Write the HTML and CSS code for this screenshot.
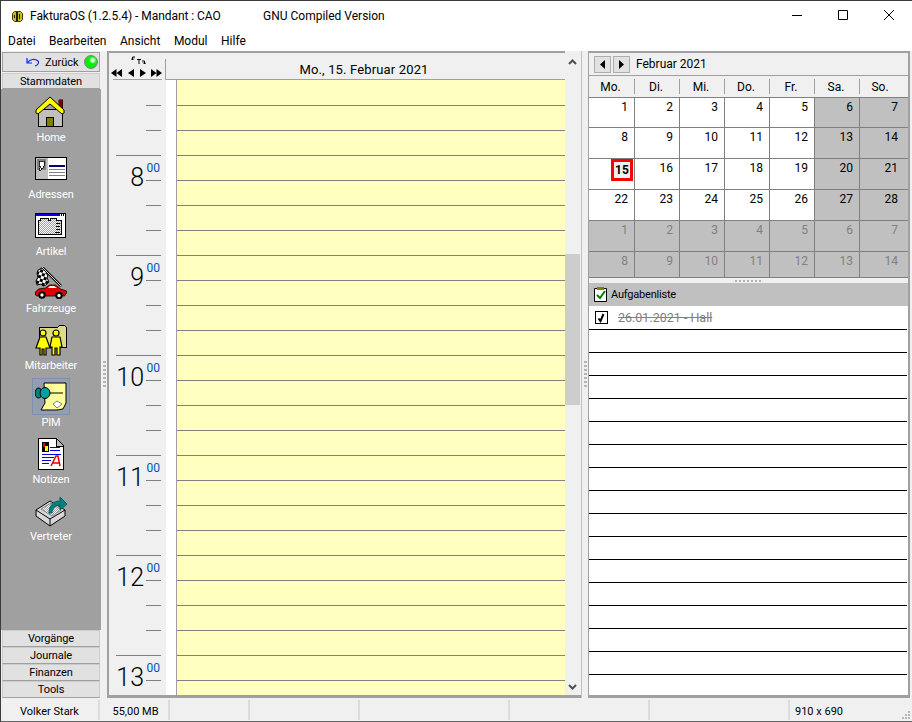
FILE: index.html
```html
<!DOCTYPE html>
<html lang="de">
<head>
  <meta charset="UTF-8" />
  <title>FakturaOS</title>
  <link rel="stylesheet" href="styles.css">
</head>
<body>
  <div class="window">
    <div class="titlebar">
      <svg class="app-icon" width="11" height="11" viewBox="0 0 11 11">
        <path d="M2.500 .5h6l2 2v6l-2 2h-6l-2-2v-6z" fill="#c8bc20" stroke="#403c00"/>
        <path d="M4 1h2v9H4zM7 3h1v5H7zM2 4h1v3H2z" fill="#202000"/>
      </svg>
      <span class="title">FakturaOS (1.2.5.4) - Mandant : CAO</span>
      <span class="title-extra">GNU Compiled Version</span>
      <div class="win-controls">
        <svg width="46" height="30" viewBox="0 0 46 30"><path d="M18 14.500h10" stroke="#000"/></svg>
        <svg width="46" height="30" viewBox="0 0 46 30"><path d="M18.500 9.500h9v9h-9z" fill="none" stroke="#000"/></svg>
        <svg width="46" height="30" viewBox="0 0 46 30"><path d="M18 9l10 10M28 9L18 19" stroke="#000" fill="none"/></svg>
      </div>
    </div>

    <div class="menubar">
      <span>Datei</span>
      <span>Bearbeiten</span>
      <span>Ansicht</span>
      <span>Modul</span>
      <span>Hilfe</span>
    </div>

    <div class="main">
      <!-- left module bar -->
      <div class="sidebar">
        <div class="back-btn">
          <svg width="14" height="10" viewBox="0 0 14 10"><path d="M1 1v5h5M1.500 5.500C4 2 9 1.500 12 4c1.500 1.500 0 4-3 5" fill="none" stroke="#0030e0" stroke-width="1.200"/></svg>
          <span>Zurück</span>
          <span class="led"></span>
        </div>
        <div class="tab">Stammdaten</div>
        <div class="modules">
          <div class="module">
            <svg width="32" height="32" viewBox="0 0 32 32" shape-rendering="crispEdges">
              <path d="M23.500 3.500h4v10h-4z" fill="#800000" stroke="#000" stroke-width=".5"/>
              <path d="M3.500 13.500h24v17h-24z" fill="#c0c0c0" stroke="#000"/>
              <path d="M11.500 21.500h7v9h-7z" fill="#808000" stroke="#000"/>
              <path d="M15 1L1 14v3l2 1L15 8l12 10 2-1v-3z" fill="#ffff00" stroke="#000" shape-rendering="auto"/>
            </svg>
            <span>Home</span>
          </div>
          <div class="module">
            <svg width="32" height="32" viewBox="0 0 32 32" shape-rendering="crispEdges">
              <path d="M.5 4.500h31v22H.5z" fill="#fff" stroke="#000"/>
              <path d="M1 5h12v21H1z" fill="#c0c0c0"/>
              <path d="M2 6h9v11H2z" fill="#808080"/>
              <path d="M4 8h5v5H8v2H6v2H4v-2h1v-2H4z" fill="#fff" stroke="#000" stroke-width=".8"/>
              <path d="M14 12h16v2H14z" fill="#000080"/>
              <path d="M14 16h16v1H14zM14 19h16v1H14zM14 22h16v1H14z" fill="#808080"/>
              <path d="M31 5h1v22H1v-1h30z" fill="#000"/>
            </svg>
            <span>Adressen</span>
          </div>
          <div class="module">
            <svg width="32" height="32" viewBox="0 0 32 32" shape-rendering="crispEdges">
              <defs>
                <pattern id="dither-grey" width="2" height="2" patternUnits="userSpaceOnUse">
                  <path d="M0 0h2v2H0z" fill="#fff"/><path d="M0 0h1v1H0zM1 1h1v1H1z" fill="#a0a0a0"/>
                </pattern>
              </defs>
              <path d="M.5 3.500h30v24H.5z" fill="#fff" stroke="#000"/>
              <path d="M1 4h24v2H1z" fill="#0000e0"/>
              <path d="M26 4h1v2h-1zM28 4h1v2h-1z" fill="#000"/>
              <path d="M3.500 10.500h2v-2h8v2h2v-2h6v2h5v14h-23z" fill="url(#dither-grey)" stroke="#000"/>
              <path d="M21 13h4v1h-4zM21 16h4v1h-4zM21 19h4v1h-4zM20 22h5v1h-5z" fill="#000"/>
            </svg>
            <span>Artikel</span>
          </div>
          <div class="module">
            <svg width="32" height="32" viewBox="0 0 32 32">
              <defs>
                <pattern id="checker" width="6" height="6" patternUnits="userSpaceOnUse" patternTransform="rotate(20)">
                  <path d="M0 0h6v6H0z" fill="#fff"/><path d="M0 0h3v3H0zM3 3h3v3H3z" fill="#000"/>
                </pattern>
              </defs>
              <path d="M7 0l19 19" stroke="#000" stroke-width="2.500"/>
              <path d="M7 0l19 19" stroke="#ffff00" stroke-width="1"/>
              <path d="M3 3l4-2 6 6-1 4 2 4-3 3-3 1-2-2-4 1-1-4 2-4-1-3z" fill="url(#checker)" stroke="#000"/>
              <path d="M.5 28v-3l3-3 7-1 4-3h6l5 4 6 2v2l-2 3H2z" fill="#e00000" stroke="#000" stroke-width=".8"/>
              <path d="M13 21l2-2h4l3 2z" fill="#fff"/>
              <circle cx="7" cy="28" r="2.700" fill="#fff" stroke="#000" stroke-width="2"/>
              <circle cx="24" cy="28.500" r="2.700" fill="#fff" stroke="#000" stroke-width="2"/>
            </svg>
            <span>Fahrzeuge</span>
          </div>
          <div class="module">
            <svg width="32" height="32" viewBox="0 0 32 32" shape-rendering="crispEdges">
              <path d="M4.500 3.500h18l2-2h5l2 2v20h-27z" fill="#dcdc88" stroke="#000"/>
              <g fill="#ffff00" stroke="#000" stroke-width="1.200" shape-rendering="auto">
                <circle cx="8" cy="9" r="3"/>
                <path d="M5 13h6l4 11h-4v7H9v-6H7v6H5v-7H1z"/>
                <circle cx="21" cy="9" r="3"/>
                <path d="M17 13h8l2 10h-2v8h-3v-7h-2v7h-3v-8h-2z"/>
              </g>
            </svg>
            <span>Mitarbeiter</span>
          </div>
          <div class="module is-active">
            <div class="module-icon">
              <svg width="32" height="32" viewBox="0 0 32 32">
                <path d="M9 2h22v20l-3 6-6 1H6l4-7z" fill="#ffff99" stroke="#000"/>
                <path d="M22 27l-4-4 4-3 5 3z" fill="#fff" stroke="#808080"/>
                <path d="M14 12h14" stroke="#000"/>
                <ellipse cx="3.500" cy="12" rx="3.500" ry="5" fill="#008080" stroke="#000"/>
                <ellipse cx="10" cy="12" rx="5" ry="5.500" fill="#00a0a0" stroke="#000"/>
              </svg>
            </div>
            <span>PIM</span>
          </div>
          <div class="module">
            <svg width="32" height="32" viewBox="0 0 32 32" shape-rendering="crispEdges">
              <path d="M3.500 .5h18l7 7v24h-25z" fill="#fff" stroke="#000"/>
              <path d="M21.500 1v7h7" fill="#c0c0c0" stroke="#000"/>
              <path d="M7 4h7v10H7z" fill="#000"/>
              <path d="M8 5h2v4H8z" fill="#e00000"/>
              <path d="M10 8h3v5h-3z" fill="#ffff00"/>
              <path d="M7 16h19v1H7zM15 9h10v1H15zM15 12h10v1H15zM7 19h12v1H7zM7 22h9v1H7zM7 25h7v1H7z" fill="#0000e0"/>
              <path d="M16 28l5-10h2l2 10M18 25h6" fill="none" stroke="#e00000" stroke-width="1.500" shape-rendering="auto"/>
            </svg>
            <span>Notizen</span>
          </div>
          <div class="module">
            <svg width="32" height="32" viewBox="0 0 32 32">
              <path d="M1 15L15 6l15 9v6L15 31 1 21z" fill="#d8d8d8" stroke="#000"/>
              <path d="M1 15l14 9v7M15 24l15-9" fill="none" stroke="#000"/>
              <path d="M6 14l10-6 10 7-9 6z" fill="url(#dither-grey)" stroke="#808080"/>
              <path d="M14 18c0-7 4-12 11-12V2l7 7-7 6v-5c-4 0-8 3-8 8z" fill="#008080" stroke="#006060"/>
            </svg>
            <span>Vertreter</span>
          </div>
        </div>
        <div class="tab">Vorgänge</div>
        <div class="tab">Journale</div>
        <div class="tab">Finanzen</div>
        <div class="tab">Tools</div>
      </div>

      <div class="splitter"><i></i></div>

      <!-- day view -->
      <div class="dayview">
        <div class="day-head">
          <div class="day-nav">
            <div class="nav-today">
              <svg width="15" height="10" viewBox="0 0 15 10"><path d="M4 1H1.500v3M0 2.500L1.500 4 3 2.500M6 3.500h4M8 3.500V8M11 5h2.500v3M12 6.500L13.500 8 15 6.500" fill="none" stroke="#000"/></svg>
            </div>
            <div class="nav-arrows">
              <svg width="51" height="8" viewBox="0 0 51 8">
                <path d="M0 4l5.500-4v8zM5.500 4L11 0v8zM17 4l6-4v8zM29 0l6 4-6 4zM40 0l5.500 4L40 8zM45.500 0L51 4l-5.500 4z" fill="#000"/>
              </svg>
            </div>
          </div>
          <div class="day-date">Mo., 15. Februar 2021</div>
        </div>
        <div class="day-body">
          <div class="hours">
            <div class="hour first"></div>
            <div class="hour"><span class="h-num">8</span><span class="h-min">00</span></div>
            <div class="hour"><span class="h-num">9</span><span class="h-min">00</span></div>
            <div class="hour"><span class="h-num">10</span><span class="h-min">00</span></div>
            <div class="hour"><span class="h-num">11</span><span class="h-min">00</span></div>
            <div class="hour"><span class="h-num">12</span><span class="h-min">00</span></div>
            <div class="hour"><span class="h-num">13</span><span class="h-min">00</span></div>
          </div>
          <div class="strip"></div>
          <div class="slots"></div>
        </div>
      </div>

      <div class="scrollbar">
        <div class="sb-btn">
          <svg width="9" height="6" viewBox="0 0 9 6"><path d="M1 5l3.500-3.500L8 5" fill="none" stroke="#505050" stroke-width="2"/></svg>
        </div>
        <div class="sb-track"><div class="sb-thumb"></div></div>
        <div class="sb-btn">
          <svg width="9" height="6" viewBox="0 0 9 6"><path d="M1 1l3.500 3.500L8 1" fill="none" stroke="#505050" stroke-width="2"/></svg>
        </div>
      </div>

      <div class="splitter right"><i></i></div>

      <!-- calendar and task list -->
      <div class="side">
        <div class="cal-head">
          <div class="cal-btn"><svg width="5" height="9" viewBox="0 0 5 9"><path d="M5 0v9L0 4.500z"/></svg></div>
          <div class="cal-btn"><svg width="5" height="9" viewBox="0 0 5 9"><path d="M0 0v9l5-4.500z"/></svg></div>
          <span class="cal-month">Februar 2021</span>
        </div>
        <div class="cal-days">
          <span>Mo.</span><span>Di.</span><span>Mi.</span><span>Do.</span><span>Fr.</span><span>Sa.</span><span>So.</span>
        </div>
        <div class="cal-grid">
          <span>1</span><span>2</span><span>3</span><span>4</span><span>5</span><span class="we">6</span><span class="we">7</span>
          <span>8</span><span>9</span><span>10</span><span>11</span><span>12</span><span class="we">13</span><span class="we">14</span>
          <span><b class="today">15</b></span><span>16</span><span>17</span><span>18</span><span>19</span><span class="we">20</span><span class="we">21</span>
          <span>22</span><span>23</span><span>24</span><span>25</span><span>26</span><span class="we">27</span><span class="we">28</span>
          <span class="off">1</span><span class="off">2</span><span class="off">3</span><span class="off">4</span><span class="off">5</span><span class="off">6</span><span class="off">7</span>
          <span class="off">8</span><span class="off">9</span><span class="off">10</span><span class="off">11</span><span class="off">12</span><span class="off">13</span><span class="off">14</span>
        </div>
        <div class="hsplit"><i></i></div>
        <div class="task-head">
          <svg width="13" height="15" viewBox="0 0 13 15">
            <path d="M.5 1.500h12v13H.5z" fill="#fff" stroke="#000"/>
            <path d="M3 0h7v3H3z" fill="#808000"/>
            <path d="M3 8l3 3 5-7" fill="none" stroke="#008000" stroke-width="2"/>
          </svg>
          <span>Aufgabenliste</span>
        </div>
        <div class="tasks">
          <div class="task">
            <span class="check"><svg width="11" height="11" viewBox="0 0 11 11"><path d="M2.500 6.500l2 2.500 3-7" fill="none" stroke="#000" stroke-width="2"/></svg></span>
            <s>26.01.2021 - Hall</s>
          </div>
        </div>
      </div>
    </div>

    <div class="statusbar">
      <span class="cell w100">Volker Stark</span>
      <span class="cell w70">55,00 MB</span>
      <span class="cell w80"></span>
      <span class="cell w110"></span>
      <span class="cell w150"></span>
      <span class="cell w140"></span>
      <span class="cell w140"></span>
      <span class="cell last">
        <span>910 x 690</span>
        <svg class="grip" width="8" height="8" viewBox="0 0 8 8"><path d="M6 0h2v2H6zM3 3h2v2H3zM6 3h2v2H6zM0 6h2v2H0zM3 6h2v2H3zM6 6h2v2H6z" fill="#b8b8b8"/></svg>
      </span>
    </div>
  </div>
</body>
</html>
```

FILE: styles.css
```css
* {
  box-sizing: border-box;
}

html, body {
  margin: 0;
  padding: 0;
  height: 100%;
}

body {
  font-family: Roboto, 'Liberation Sans', sans-serif;
  font-size: 12px;
  color: #000;
  overflow: hidden;
}

.window {
  width: 912px;
  height: 722px;
  display: flex;
  flex-direction: column;
  background: #f0f0f0;
  border: 1px solid #3c3c3c;
  border-bottom-color: #646464;
  border-right: none;
}

.titlebar {
  height: 30px;
  flex: none;
  display: flex;
  align-items: center;
  background: #fff;
  padding-left: 11px;
}

.app-icon {
  margin-right: 7px;
}

.title {
  width: 233px;
  letter-spacing: -.05px;
}

.win-controls {
  margin-left: auto;
  display: flex;
}

.menubar {
  height: 20px;
  flex: none;
  display: flex;
  align-items: center;
  gap: 13.5px;
  background: #fff;
  padding-left: 7px;
}

.main {
  flex: 1;
  display: flex;
  min-height: 0;
}

/* module bar */
.sidebar {
  width: 100px;
  flex: none;
  display: flex;
  flex-direction: column;
  padding-top: 1px;
}

.back-btn {
  height: 20px;
  flex: none;
  margin: 0 1px 1px;
  display: flex;
  align-items: center;
  gap: 5px;
  padding-left: 23px;
  font-size: 11px;
  background: #e1e1e1;
  border: 1px solid #a0a0a0;
}

.led {
  width: 14px;
  height: 14px;
  border-radius: 50%;
  border: 1px solid #808080;
  background: radial-gradient(circle at 65% 35%, #e0ffe0 10%, #00f000 35%);
}

.tab {
  height: 17px;
  flex: none;
  margin: 0 1px;
  font-size: 11px;
  letter-spacing: -.1px;
  line-height: 15px;
  text-align: center;
  background: #e1e1e1;
  border: 1px solid #cccccc;
  border-bottom-color: #a0a0a0;
}

.sidebar > .tab:nth-child(2) {
  height: 16px;
}

.modules {
  flex: 1;
  background: #a0a0a0;
  padding-top: 7px;
}

.module {
  height: 57px;
  display: flex;
  flex-direction: column;
  align-items: center;
  color: #fff;
  font-size: 11px;
  letter-spacing: -.1px;
  line-height: 14px;
}

.module svg {
  display: block;
  flex: none;
  margin-bottom: 3px;
}

.module-icon {
  width: 38px;
  height: 37px;
  margin: -3px 0 0;
  padding: 2px;
  background: #949eac;
  border: 1px solid #7c90b0;
}

.module.is-active span {
  margin-top: 1px;
}

.splitter {
  width: 6px;
  flex: none;
  display: flex;
  align-items: center;
  justify-content: center;
}

.splitter i {
  width: 3px;
  height: 28px;
  background: repeating-linear-gradient(to bottom, #b4b4b4 0 2px, transparent 2px 4px);
}

/* day view */
.dayview {
  width: 458px;
  flex: none;
  display: flex;
  flex-direction: column;
  border-top: 2px solid #a0a0a0;
  border-left: 2px solid #a0a0a0;
  border-bottom: 3px solid #a0a0a0;
  min-height: 0;
}

.day-head {
  height: 27px;
  flex: none;
  display: flex;
}

.day-nav {
  width: 56px;
  flex: none;
  padding-top: 3px;
}

.nav-today {
  height: 10px;
  padding-left: 22px;
}

.nav-today svg,
.nav-arrows svg {
  display: block;
}

.nav-arrows {
  width: 49px;
  height: 11px;
  margin: 3px 0 0 4px;
  border-bottom: 1px solid #a0a0a0;
}

.nav-arrows svg {
  margin-left: -2px;
}

.day-date {
  flex: 1;
  margin-top: 6px;
  padding: 3px 3px 0 0;
  text-align: center;
  font-size: 13px;
  letter-spacing: .15px;
  border-left: 1px solid #a0a0a0;
  border-bottom: 1px solid #a0a0a0;
}

.day-body {
  flex: 1;
  display: flex;
  min-height: 0;
  overflow: hidden;
}

.hours {
  width: 57px;
  flex: none;
  overflow: hidden;
}

.hour {
  height: 100px;
  margin: 0 5px 0 7px;
  display: flex;
  justify-content: flex-end;
  padding-right: 1px;
  border-top: 1px solid #808080;
  background: repeating-linear-gradient(to bottom, transparent 0 24px, #808080 24px 25px) right 0 top 0 / 15px 100% no-repeat;
}

.hour.first {
  height: 75px;
  border-top: none;
  background-position: right 0 top 1px;
}

.h-num {
  font-size: 25px;
  font-weight: 350;
  line-height: 24px;
  margin: 10px 1px 0 0;
}

.h-min {
  width: 15px;
  color: #0054b8;
  line-height: 12px;
  margin-top: 6px;
  text-align: right;
}

.strip {
  width: 11px;
  flex: none;
  background: #fff;
  border-right: 1px solid #a0a0a0;
}

.slots {
  flex: 1;
  background: repeating-linear-gradient(to bottom, #ffffbf 0 24px, #808080 24px 25px) 0 1px / 100% 100% no-repeat #ffffbf;
}

/* scrollbar */
.scrollbar {
  width: 16px;
  flex: none;
  display: flex;
  flex-direction: column;
  padding: 2px 1px 0 0;
  border-bottom: 3px solid #a0a0a0;
}

.sb-btn {
  height: 17px;
  flex: none;
  display: flex;
  align-items: center;
  justify-content: center;
}

.sb-track {
  flex: 1;
  padding-top: 184px;
}

.sb-thumb {
  height: 151px;
  background: #cdcdcd;
}

.splitter.right {
  width: 7px;
  border-left: 1px solid #c0c0c0;
}

/* calendar */
.side {
  width: 322px;
  flex: none;
  display: flex;
  flex-direction: column;
  border-top: 2px solid #a0a0a0;
  border-left: 1px solid #a0a0a0;
  border-right: 2px solid #a0a0a0;
  border-bottom: 3px solid #a0a0a0;
  min-height: 0;
}

.cal-head {
  height: 23px;
  flex: none;
  display: flex;
  align-items: center;
  gap: 2px;
  padding-left: 5px;
  border-bottom: 1px solid #a0a0a0;
}

.cal-btn {
  width: 17px;
  height: 17px;
  display: flex;
  align-items: center;
  justify-content: center;
  background: #e1e1e1;
  border: 1px solid #adadad;
}

.cal-month {
  margin-left: 4px;
}

.cal-days {
  height: 22px;
  flex: none;
  display: grid;
  grid-template-columns: 46px repeat(5, 45px) 1fr;
  border-bottom: 1px solid #808080;
}

.cal-days span {
  height: 15px;
  margin-top: 3px;
  padding-right: 2px;
  text-align: center;
  line-height: 16px;
  border-right: 1px solid #a0a0a0;
}

.cal-days span:last-child {
  border-right: none;
  padding-right: 8px;
}

.cal-grid {
  height: 180px;
  flex: none;
  display: grid;
  grid-template-columns: 46px repeat(5, 45px) 1fr;
  grid-template-rows: 30px repeat(4, 31px) 26px;
  background: #fff;
}

.cal-grid span {
  text-align: right;
  padding: 1px 6px 0 0;
  border-right: 1px solid #808080;
  border-bottom: 1px solid #808080;
  line-height: 16px;
}

.cal-grid span:nth-child(7n) {
  border-right: none;
  padding-right: 10px;
}

.cal-grid .we {
  background: #c0c0c0;
}

.cal-grid .off {
  background: #c0c0c0;
  color: #808080;
}

.today {
  display: inline-block;
  width: 22px;
  height: 22px;
  margin: -1px -5px 0 0;
  border: 3px solid #f00;
  background: #f0f0f0;
  text-align: center;
  line-height: 16px;
}

.hsplit {
  height: 5px;
  flex: none;
  display: flex;
  justify-content: center;
  align-items: center;
}

.hsplit i {
  width: 28px;
  height: 2px;
  background: repeating-linear-gradient(to right, #b4b4b4 0 2px, transparent 2px 4px);
}

.task-head {
  height: 23px;
  flex: none;
  display: flex;
  align-items: center;
  gap: 4px;
  padding-left: 5px;
  font-size: 11px;
  letter-spacing: -.2px;
  background: #c0c0c0;
}

.tasks {
  flex: 1;
  min-height: 0;
  background: repeating-linear-gradient(to bottom, transparent 0 22px, #000 22px 23px) 0 1px / calc(100% - 1px) 100% no-repeat #fff;
}

.task {
  height: 23px;
  display: flex;
  align-items: center;
  gap: 10px;
  padding-left: 6px;
  font-size: 12.5px;
  color: #808080;
}

.check {
  width: 13px;
  height: 13px;
  display: flex;
  align-items: center;
  justify-content: center;
  background: #fff;
  border: 1px solid #000;
}

/* status bar */
.statusbar {
  height: 23px;
  flex: none;
  display: flex;
  padding: 2px 0 1px;
  font-size: 11px;
}

.cell {
  line-height: 23px;
  border-right: 2px solid #dcdcdc;
  text-align: center;
}

.w100 { width: 99px; }
.w70 { width: 70px; padding-left: 3px; }
.w80 { width: 80px; }
.w110 { width: 110px; }
.w150 { width: 150px; }
.w140 { width: 140px; }

.cell.last {
  flex: 1;
  display: flex;
  justify-content: space-between;
  border-right: none;
  padding: 0 2px 0 5px;
}

.grip {
  align-self: flex-end;
  margin-bottom: 1px;
}
```
